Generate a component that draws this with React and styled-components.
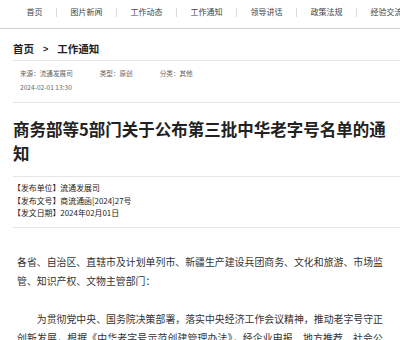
import React from "react";
import styled, { createGlobalStyle } from "styled-components";

const navItems = ["首页", "图片新闻", "工作动态", "工作通知", "领导讲话", "政策法规", "经验交流"];

const infoRows = [
  ["【发布单位】", "流通发展司"],
  ["【发布文号】", "商流通函[2024]27号"],
  ["【发文日期】", "2024年02月01日"],
];

export default function App() {
  return (
    <>
      <GlobalStyle />
      <Nav>
        {navItems.map((item, i) => (
          <React.Fragment key={item}>
            {i > 0 && <NavSep />}
            <NavItem>{item}</NavItem>
          </React.Fragment>
        ))}
      </Nav>

      <Main>
        <Crumb>
          <span>首页</span>
          <CrumbArrow>&gt;</CrumbArrow>
          <span>工作通知</span>
        </Crumb>

        <Meta>
          <MetaRow>
            <MetaItem>来源：流通发展司</MetaItem>
            <MetaItem>类型：原创</MetaItem>
            <MetaItem>分类：其他</MetaItem>
          </MetaRow>
          <MetaRow>2024-02-01 13:30</MetaRow>
        </Meta>

        <Title>商务部等5部门关于公布第三批中华老字号名单的通知</Title>

        <Info>
          {infoRows.map(([label, value]) => (
            <InfoRow key={label}>
              {label}
              {value}
            </InfoRow>
          ))}
        </Info>

        <Body>
          <Para>
            各省、自治区、直辖市及计划单列市、新疆生产建设兵团商务、文化和旅游、市场监管、知识产权、文物主管部门：
          </Para>
          <Para indent>
            为贯彻党中央、国务院决策部署，落实中央经济工作会议精神，推动老字号守正创新发展，根据《中华老字号示范创建管理办法》，经企业申报、地方推荐、社会公示等程序，现将第三批中华老字号名单予以公布。
          </Para>
        </Body>
      </Main>
    </>
  );
}

/* ==================== STYLED COMPONENTS ==================== */

const GlobalStyle = createGlobalStyle`
  html, body {
    margin: 0;
    padding: 0;
    background: #fff;
    overflow: hidden;
  }
  body {
    font-family: "Noto Sans CJK SC", "Liberation Sans", sans-serif;
    color: #333;
  }
`;

const Nav = styled.div`
  display: flex;
  align-items: flex-start;
  height: 28px;
  padding-left: 13px;
  border-bottom: 1px solid #cfcfcf;
  white-space: nowrap;
  overflow: hidden;
  box-sizing: content-box;
`;

const NavItem = styled.span`
  flex: none;
  padding: 0 13.5px;
  margin-top: 7px;
  font-size: 8px;
  line-height: 10px;
  color: #444;
`;

const NavSep = styled.span`
  flex: none;
  width: 1px;
  height: 9px;
  margin-top: 8px;
  background: #dcdcdc;
`;

const Main = styled.div`
  padding: 0 13px;
`;

const Divided = styled.div`
  margin-right: -13px;
  border-bottom: 1px solid #e6e6e6;
`;

const Crumb = styled(Divided)`
  display: flex;
  align-items: center;
  padding: 13px 0 4px;
  font-size: 10.5px;
  line-height: 14px;
  font-weight: 700;
  color: #222;
`;

const CrumbArrow = styled.span`
  margin: 0 9px;
  font-family: "Liberation Sans", sans-serif;
  font-size: 9px;
`;

const Meta = styled(Divided)`
  padding: 5px 0 8px 7px;
  font-size: 6.6px;
  line-height: 14px;
  color: #666;
`;

const MetaRow = styled.div`
  display: flex;
`;

const MetaItem = styled.span`
  margin-right: 27px;
`;

const Title = styled(Divided)`
  margin-right: -13px;
  padding: 14px 13px 11px 0;
  font-size: 16.5px;
  line-height: 24px;
  font-weight: 700;
  color: #222;
`;

const Info = styled(Divided)`
  padding: 5px 0 7px;
  font-size: 7.9px;
  line-height: 12.5px;
  color: #222;
`;

const InfoRow = styled.div``;

const Body = styled.div`
  padding: 25px 4px 0;
  font-size: 9.9px;
  line-height: 19px;
  color: #333;
  text-align: justify;
`;

const Para = styled.p`
  margin: 0 0 19px;
  text-indent: ${({ indent }) => (indent ? "2em" : "0")};
`;
